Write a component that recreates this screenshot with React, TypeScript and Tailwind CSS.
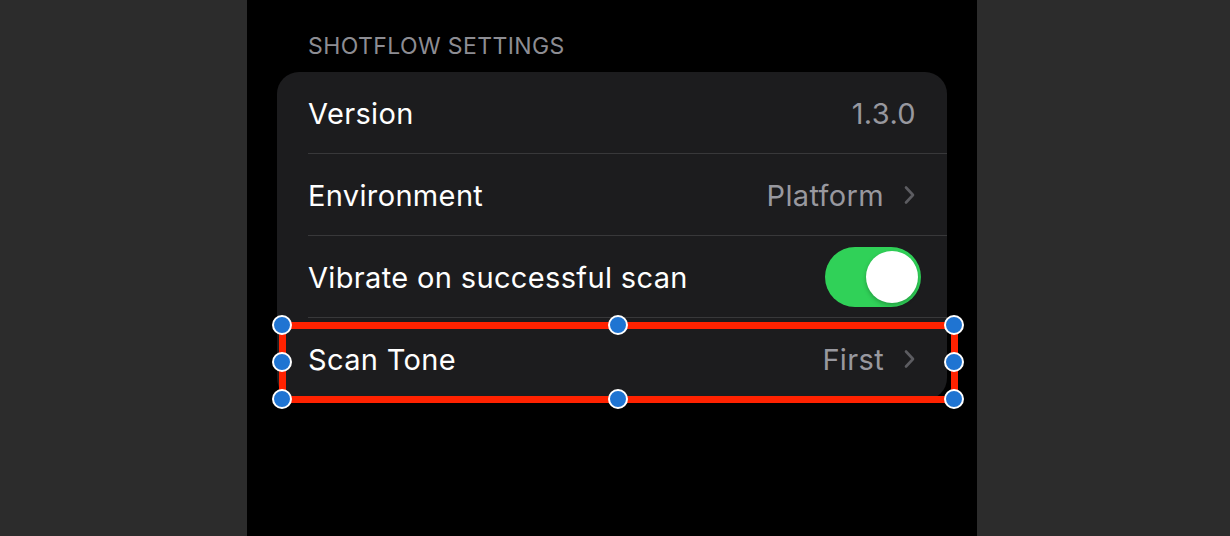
import React from "react"

const font = { fontFamily: "Inter, 'Noto Sans', sans-serif" }

function Chevron() {
  return (
    <svg width="13" height="22" viewBox="0 0 13 22" className="ml-[19px]">
      <path d="M3 3.5 L10 11 L3 18.5" fill="none" stroke="#5c5c61" strokeWidth="2.6" strokeLinecap="round" strokeLinejoin="round" />
    </svg>
  )
}

function Toggle() {
  return (
    <div className="w-[96px] h-[60px] rounded-full bg-[#30d158] flex items-center justify-end pr-[3px] mr-[-5px]">
      <div className="w-[52px] h-[52px] rounded-full bg-white shadow-[0_2px_4px_rgba(0,0,0,0.25)]" />
    </div>
  )
}

function Row({ label, value, chevron, toggle, last }: { label: string; value?: string; chevron?: boolean; toggle?: boolean; last?: boolean }) {
  return (
    <div className="pl-[31px]">
      <div className={`h-[82px] flex items-center pr-[31px] ${last ? "" : "border-b border-[#38383a]"}`}>
        <span className="text-[29px] text-white tracking-[0.35px] pt-[2px]">{label}</span>
        <div className="ml-auto flex items-center">
          {value && <span className="text-[29px] text-[#98989f] tracking-[0.35px] pt-[2px]">{value}</span>}
          {chevron && <Chevron />}
          {toggle && <Toggle />}
        </div>
      </div>
    </div>
  )
}

function Handle({ x, y }: { x: string; y: string }) {
  return (
    <div
      className={`absolute w-[20px] h-[20px] rounded-full bg-[#1f74d2] border-2 border-white -translate-x-1/2 -translate-y-1/2 ${x} ${y}`}
    />
  )
}

export default function App() {
  return (
    <div className="w-[1230px] h-[536px] flex bg-[#2c2c2c] overflow-hidden" style={font}>
      <div className="w-[247px]" />
      <div className="w-[730px] h-full bg-black px-[30px]">
        <div className="pt-[33px] mb-[13px] pl-[31px] text-[23px] leading-[26px] text-[#8d8d93] tracking-[0.4px]">
          SHOTFLOW SETTINGS
        </div>
        <div className="relative bg-[#1c1c1e] rounded-[22px]">
          <Row label="Version" value="1.3.0" />
          <Row label="Environment" value="Platform" chevron />
          <Row label="Vibrate on successful scan" toggle />
          <Row label="Scan Tone" value="First" chevron last />

          {/* selection overlay */}
          <div className="absolute left-[5px] top-[253px] w-[672px] h-[74px]">
            <div className="absolute -inset-[3.5px] border-[7px] border-[#ff2200]" />
            <Handle x="left-0" y="top-0" />
            <Handle x="left-1/2" y="top-0" />
            <Handle x="left-full" y="top-0" />
            <Handle x="left-0" y="top-1/2" />
            <Handle x="left-full" y="top-1/2" />
            <Handle x="left-0" y="top-full" />
            <Handle x="left-1/2" y="top-full" />
            <Handle x="left-full" y="top-full" />
          </div>
        </div>
      </div>
      <div className="flex-1" />
    </div>
  )
}
